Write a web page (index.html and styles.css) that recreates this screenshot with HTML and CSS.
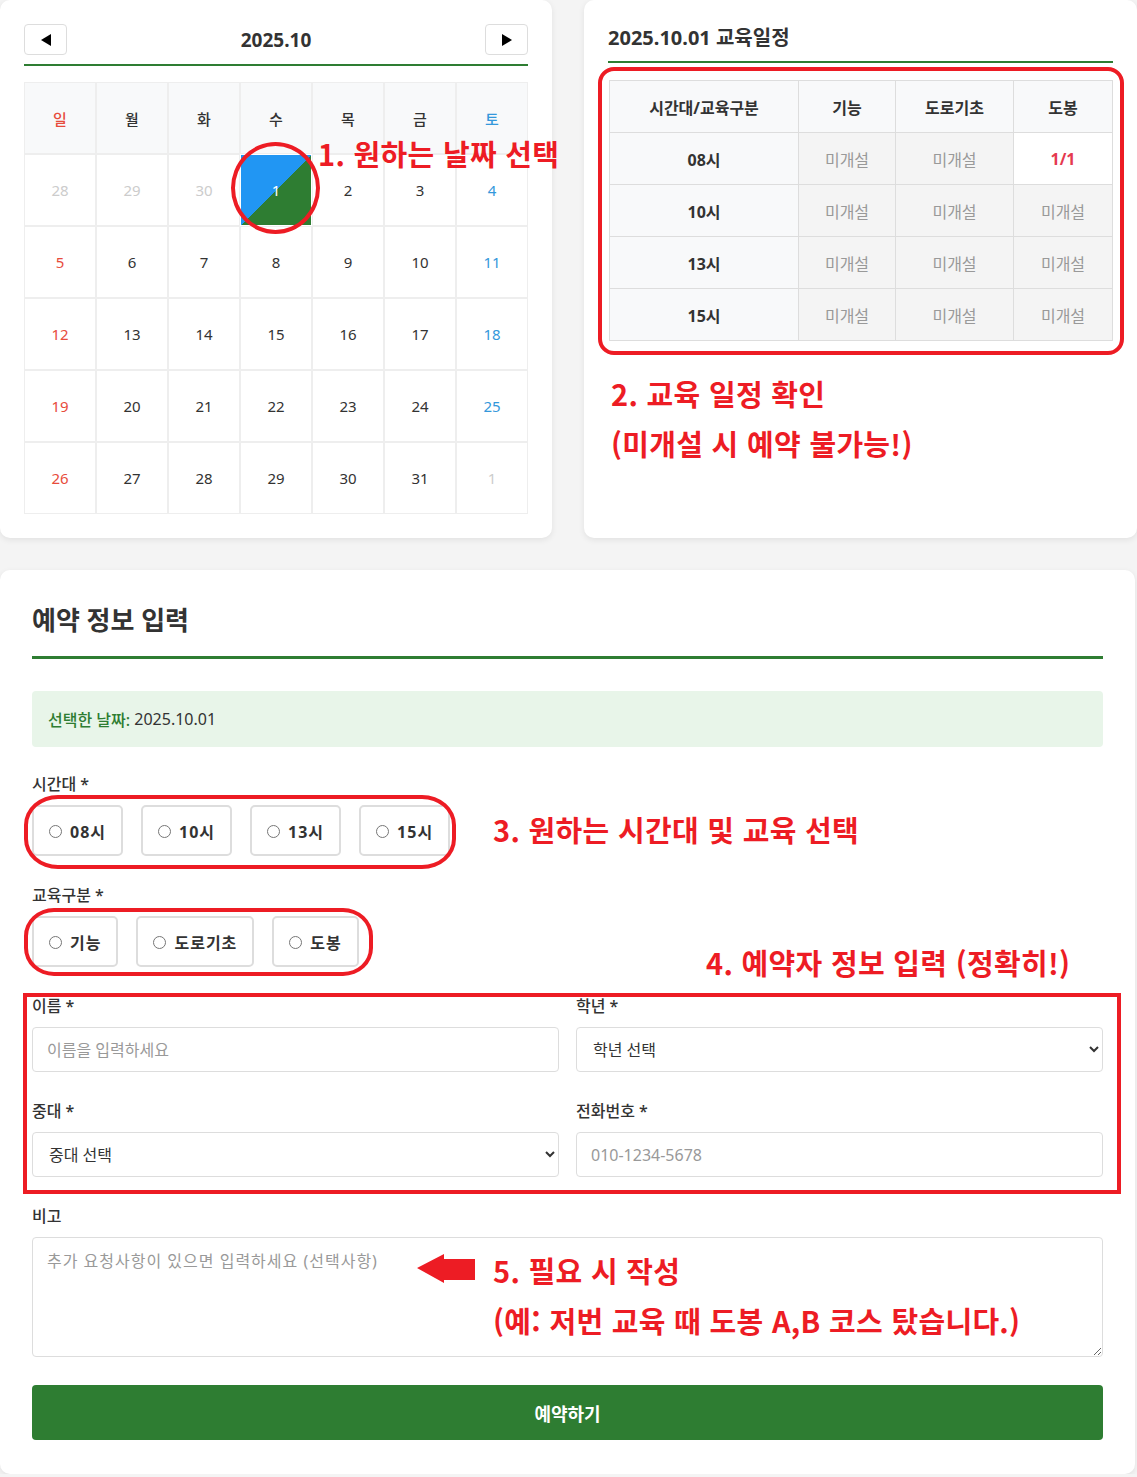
FILE: index.html
```html
<!DOCTYPE html>
<html lang="ko">
<head>
<meta charset="utf-8">
<title>교육 예약</title>
<link rel="stylesheet" href="styles.css">
</head>
<body>
<div class="page">
  <div class="top-row">
    <section class="card cal-card">
      <div class="cal-head">
        <button class="nav-btn" type="button" aria-label="이전 달"><svg width="10" height="12" viewBox="0 0 10 12"><polygon points="10,0 10,12 0,6" fill="#000"/></svg></button>
        <div class="cal-title">2025.10</div>
        <button class="nav-btn" type="button" aria-label="다음 달"><svg width="10" height="12" viewBox="0 0 10 12"><polygon points="0,0 0,12 10,6" fill="#000"/></svg></button>
      </div>
      <div class="cal-grid">
        <div class="dow sun">일</div><div class="dow">월</div><div class="dow">화</div><div class="dow">수</div><div class="dow">목</div><div class="dow">금</div><div class="dow sat">토</div>
        <div class="day other">28</div><div class="day other">29</div><div class="day other">30</div><div class="day selected">1</div><div class="day">2</div><div class="day">3</div><div class="day sat">4</div>
        <div class="day sun">5</div><div class="day">6</div><div class="day">7</div><div class="day">8</div><div class="day">9</div><div class="day">10</div><div class="day sat">11</div>
        <div class="day sun">12</div><div class="day">13</div><div class="day">14</div><div class="day">15</div><div class="day">16</div><div class="day">17</div><div class="day sat">18</div>
        <div class="day sun">19</div><div class="day">20</div><div class="day">21</div><div class="day">22</div><div class="day">23</div><div class="day">24</div><div class="day sat">25</div>
        <div class="day sun">26</div><div class="day">27</div><div class="day">28</div><div class="day">29</div><div class="day">30</div><div class="day">31</div><div class="day other">1</div>
      </div>
    </section>

    <section class="card sched-card">
      <h2 class="sched-title">2025.10.01 교육일정</h2>
      <table class="sched">
        <colgroup><col class="c1"><col class="c2"><col class="c3"><col class="c4"></colgroup>
        <thead>
          <tr><th>시간대/교육구분</th><th>기능</th><th>도로기초</th><th>도봉</th></tr>
        </thead>
        <tbody>
          <tr><th>08시</th><td class="closed">미개설</td><td class="closed">미개설</td><td class="open">1/1</td></tr>
          <tr><th>10시</th><td class="closed">미개설</td><td class="closed">미개설</td><td class="closed">미개설</td></tr>
          <tr><th>13시</th><td class="closed">미개설</td><td class="closed">미개설</td><td class="closed">미개설</td></tr>
          <tr><th>15시</th><td class="closed">미개설</td><td class="closed">미개설</td><td class="closed">미개설</td></tr>
        </tbody>
      </table>
    </section>
  </div>

  <section class="card form-card">
    <h2 class="form-title">예약 정보 입력</h2>
    <div class="picked"><span class="picked-label">선택한 날짜:</span>&nbsp;2025.10.01</div>

    <div class="group">
      <div class="label">시간대 *</div>
      <div class="options">
        <label class="opt"><input type="radio" name="time"><span>08시</span></label>
        <label class="opt"><input type="radio" name="time"><span>10시</span></label>
        <label class="opt"><input type="radio" name="time"><span>13시</span></label>
        <label class="opt"><input type="radio" name="time"><span>15시</span></label>
      </div>
    </div>

    <div class="group">
      <div class="label">교육구분 *</div>
      <div class="options">
        <label class="opt"><input type="radio" name="edu"><span>기능</span></label>
        <label class="opt"><input type="radio" name="edu"><span>도로기초</span></label>
        <label class="opt"><input type="radio" name="edu"><span>도봉</span></label>
      </div>
    </div>

    <div class="two-col">
      <div class="group">
        <div class="label">이름 *</div>
        <input class="field" type="text" placeholder="이름을 입력하세요">
      </div>
      <div class="group">
        <div class="label">학년 *</div>
        <select class="field"><option>학년 선택</option></select>
      </div>
      <div class="group">
        <div class="label">중대 *</div>
        <select class="field"><option>중대 선택</option></select>
      </div>
      <div class="group">
        <div class="label">전화번호 *</div>
        <input class="field" type="text" placeholder="010-1234-5678">
      </div>
    </div>

    <div class="group">
      <div class="label">비고</div>
      <textarea class="field memo" placeholder="추가 요청사항이 있으면 입력하세요 (선택사항)"></textarea>
    </div>

    <button class="submit" type="button">예약하기</button>
  </section>

  <!-- annotation overlays -->
  <div class="mark mark-day"></div>
  <div class="note note-1">1. 원하는 날짜 선택</div>
  <div class="mark mark-table"></div>
  <div class="note note-2a">2. 교육 일정 확인</div>
  <div class="note note-2b">(미개설 시 예약 불가능!)</div>
  <div class="mark mark-time"></div>
  <div class="note note-3">3. 원하는 시간대 및 교육 선택</div>
  <div class="mark mark-edu"></div>
  <div class="note note-4">4. 예약자 정보 입력 (정확히!)</div>
  <div class="mark mark-info"></div>
  <svg class="arrow" width="58" height="29" viewBox="0 0 58 29"><polygon points="0,14 27,0 27,5 58,5 58,26 27,26 27,29" fill="#ed1c24"/></svg>
  <div class="note note-5a">5. 필요 시 작성</div>
  <div class="note note-5b">(예: 저번 교육 때 도봉 A,B 코스 탔습니다.)</div>
</div>
</body>
</html>
```

FILE: styles.css
```css
* { box-sizing: border-box; }

html, body {
  margin: 0;
  padding: 0;
  background: #f4f4f4;
}

body {
  font-family: "Noto Sans", "Noto Sans CJK KR", sans-serif;
  color: #333;
  font-size: 14px;
}

.page {
  position: relative;
  width: 1137px;
}

.top-row {
  display: grid;
  grid-template-columns: 552px 1fr;
  column-gap: 32px;
  align-items: stretch;
}

.card {
  background: #fff;
  border-radius: 10px;
  box-shadow: 0 2px 6px rgba(0, 0, 0, 0.08);
}

/* Calendar */
.cal-card {
  padding: 24px;
}

.cal-head {
  display: flex;
  align-items: center;
  justify-content: space-between;
  padding-bottom: 9px;
  border-bottom: 2px solid #2e7d32;
}

.nav-btn {
  width: 43px;
  height: 31px;
  border: 1px solid #ddd;
  border-radius: 4px;
  background: #fff;
  display: flex;
  align-items: center;
  justify-content: center;
  padding: 0;
}

.cal-title {
  font-size: 19px;
  font-weight: 700;
  line-height: 30px;
  color: #333;
}

.cal-grid {
  margin-top: 16px;
  display: grid;
  grid-template-columns: repeat(7, 72px);
  grid-auto-rows: 72px;
}

.dow, .day {
  border: 1px solid #eee;
  display: flex;
  align-items: center;
  justify-content: center;
}

.dow {
  background: #f8f9fa;
  font-size: 15px;
  font-weight: 500;
  color: #333;
}

.day {
  font-size: 15px;
  color: #333;
}

.sun { color: #e74c3c; }
.sat { color: #3498db; }
.day.other { color: #ccc; }

.day.selected {
  background: linear-gradient(135deg, #2196f3 50%, #2e7d32 50%);
  border-color: #fff;
  color: #fff;
}

/* Schedule */
.sched-card {
  padding: 24px;
}

.sched-title {
  margin: 0;
  font-size: 20px;
  font-weight: 700;
  line-height: 28px;
  color: #333;
  padding-bottom: 9px;
  border-bottom: 2px solid #2e7d32;
}

.sched {
  margin-top: 17px;
  width: 503px;
  margin-left: 1px;
  border-collapse: collapse;
  table-layout: fixed;
  font-size: 16px;
}

.sched .c1 { width: 189px; }
.sched .c2 { width: 97px; }
.sched .c3 { width: 118px; }
.sched .c4 { width: 99px; }

.sched th, .sched td {
  border: 1px solid #ddd;
  height: 52px;
  text-align: center;
  vertical-align: middle;
  padding: 0;
}

.sched th {
  background: #f8f9fa;
  font-weight: 700;
  color: #333;
}

.sched td.closed {
  background: #f4f4f4;
  color: #999;
}

.sched td.open {
  background: #fff;
  color: #e53950;
  font-weight: 700;
}

/* Form */
.form-card {
  margin-top: 32px;
  width: 1135px;
  padding: 32px 32px 34px 32px;
}

.form-title {
  margin: 0;
  font-size: 26px;
  font-weight: 700;
  line-height: 36px;
  color: #333;
  padding-bottom: 18px;
  border-bottom: 3px solid #2e7d32;
}

.picked {
  margin-top: 32px;
  height: 56px;
  background: #e8f5e9;
  border-radius: 4px;
  padding: 0 16px;
  display: flex;
  align-items: center;
  font-size: 16px;
  color: #333;
}

.picked-label {
  color: #2e7d32;
  font-weight: 500;
}

.picked + .group { margin-top: 26px; }

.group {
  margin-bottom: 28px;
}

.label {
  font-size: 16px;
  font-weight: 500;
  line-height: 22px;
  margin-bottom: 10px;
  color: #333;
}

.options {
  display: flex;
  gap: 18px;
  margin-top: 1px;
}

.opt {
  display: flex;
  align-items: center;
  height: 51px;
  padding: 0 15px;
  border: 2px solid #ddd;
  border-radius: 5px;
  font-size: 16px;
  font-weight: 700;
  letter-spacing: 1px;
  color: #333;
}

.opt input {
  margin: 2px 8px 0 0;
  width: 13px;
  height: 13px;
}

.two-col {
  display: grid;
  grid-template-columns: 1fr 1fr;
  column-gap: 17px;
}

.field {
  display: block;
  width: 100%;
  height: 45px;
  border: 1px solid #ddd;
  border-radius: 4px;
  background: #fff;
  padding: 0 14px;
  font-family: "Noto Sans", "Noto Sans CJK KR", sans-serif;
  font-size: 16px;
  color: #333;
}

select.field { padding: 0 12px; }

.field::placeholder { color: #999; }

.memo {
  height: 120px;
  padding: 12px 14px;
  resize: vertical;
  font-size: 16px;
  letter-spacing: 1px;
  line-height: 22px;
}

.submit {
  display: block;
  width: 100%;
  height: 55px;
  margin-top: 3px;
  border: none;
  border-radius: 4px;
  background: #2e7d32;
  color: #fff;
  font-family: "Noto Sans", "Noto Sans CJK KR", sans-serif;
  font-size: 18px;
  font-weight: 700;
}

/* Annotations overlay */
.mark {
  position: absolute;
  border: 4px solid #ed1c24;
  pointer-events: none;
}

.mark-day { left: 231px; top: 142px; width: 89px; height: 92px; border-radius: 50%; }
.mark-table { left: 598px; top: 67px; width: 526px; height: 288px; border-radius: 16px; }
.mark-time { left: 24px; top: 795px; width: 432px; height: 74px; border-radius: 34px / 30px; }
.mark-edu { left: 24px; top: 908px; width: 349px; height: 68px; border-radius: 30px / 28px; }
.mark-info { left: 23px; top: 993px; width: 1098px; height: 201px; }

.note {
  position: absolute;
  font-family: "Noto Sans CJK KR", "Noto Sans", sans-serif;
  font-size: 29px;
  font-weight: 700;
  line-height: 28px;
  color: #ed1c24;
  white-space: nowrap;
  letter-spacing: 0.3px;
}

.note-1 { left: 318px; top: 139px; }
.note-2a { left: 611px; top: 379px; }
.note-2b { left: 611px; top: 429px; }
.note-3 { left: 493px; top: 815px; }
.note-4 { left: 706px; top: 948px; }
.note-5a { left: 493px; top: 1256px; }
.note-5b { left: 493px; top: 1306px; }

.arrow {
  position: absolute;
  left: 417px;
  top: 1254px;
}
```
